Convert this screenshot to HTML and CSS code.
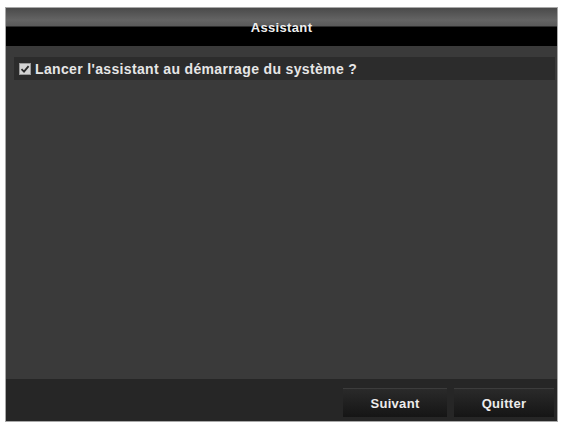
FILE: index.html
```html
<!DOCTYPE html>
<html lang="fr">
<head>
<meta charset="utf-8">
<title>Assistant</title>
<link rel="stylesheet" href="styles.css">
</head>
<body>
<div class="dialog">
  <div class="title">Assistant</div>
  <div class="content">
    <div class="row">
      <span class="check">
        <svg width="12" height="12" viewBox="0 0 12 12"><rect x="0.5" y="0.5" width="11" height="11" fill="#d4d4d4" stroke="#9a9a9a"/><path d="M2.5 6.2 L5 8.6 L9.6 3.2" fill="none" stroke="#2a2a2a" stroke-width="1.8"/></svg>
      </span>
      <span class="label">Lancer l'assistant au démarrage du système ?</span>
    </div>
  </div>
  <div class="footer">
    <button class="btn btn-next">Suivant</button>
    <button class="btn btn-quit">Quitter</button>
  </div>
</div>
</body>
</html>
```
FILE: styles.css
```css
html, body {
  margin: 0;
  padding: 0;
  background: #ffffff;
}
body {
  padding: 7px 4px 2px 5px;
  font-family: "Liberation Sans", Arial, sans-serif;
}
.dialog {
  width: 551px;
  height: 413px;
  border: 1px solid #a8a8a8;
  background: #3a3a3a;
  display: flex;
  flex-direction: column;
}
.title {
  height: 38px;
  flex: none;
  background: linear-gradient(#4a4a4a 0px, #646464 12px, #5a5a5a 18px, #000 19px, #000 100%);
  color: #eeeeee;
  font-weight: bold;
  font-size: 13px;
  letter-spacing: 0.35px;
  text-align: center;
  line-height: 40px;
}
.content {
  flex: 1;
  padding: 11px 2px 0 8px;
}
.row {
  height: 23px;
  background: #2c2c2c;
  display: flex;
  align-items: center;
  gap: 4px;
  padding-left: 5px;
}
.check {
  display: flex;
  width: 12px;
  height: 12px;
}
.label {
  color: #e6e6e6;
  font-size: 14px;
  font-weight: bold;
  letter-spacing: 0.35px;
}
.footer {
  height: 42px;
  flex: none;
  background: #262626;
  display: flex;
  justify-content: flex-end;
  align-items: flex-start;
  gap: 7px;
  padding: 9px 3px 0 0;
  box-sizing: border-box;
}
.btn {
  height: 29px;
  border: none;
  border-top: 1px solid #3c3c3c;
  background: linear-gradient(#2a2a2a, #151515);
  color: #ececec;
  font-family: "Liberation Sans", Arial, sans-serif;
  font-weight: bold;
  font-size: 13px;
  letter-spacing: 0.3px;
  padding: 0;
}
.btn-next { width: 104px; }
.btn-quit { width: 100px; }
```
